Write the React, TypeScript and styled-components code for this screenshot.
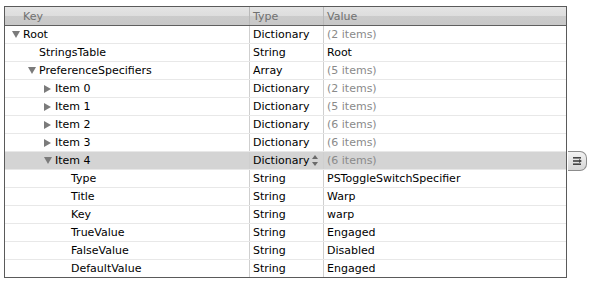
import React from "react";
import styled, { createGlobalStyle } from "styled-components";

const Global = createGlobalStyle`
  html, body { margin: 0; padding: 0; background: #ffffff; }
  body { font-family: "Lucida Grande", "DejaVu Sans", sans-serif; }
`;

const Page = styled.div`
  padding: 6px 0 0 4px;
  width: 590px;
  height: 283px;
  box-sizing: border-box;
`;

const Table = styled.div`
  width: 563px;
  border: 1px solid #5a5a5a;
  box-sizing: border-box;
  font-size: 11px;
  color: #000;
`;

const Row = styled.div<{ $selected?: boolean; $last?: boolean }>`
  position: relative;
  display: grid;
  grid-template-columns: 245px 74px 1fr;
  height: 17px;
  border-bottom: ${(p) => (p.$last ? "none" : "1px solid #e8e8e8")};
  background: ${(p) => (p.$selected ? "#d4d4d4" : "#ffffff")};
`;

const Header = styled.div`
  display: grid;
  grid-template-columns: 245px 74px 1fr;
  height: 18px;
  border-bottom: 1px solid #5f5f5f;
  background: linear-gradient(#e4e4e4 0%, #dddddd 50%, #cbcbcb 50%, #c8c8c8 100%);
  color: #707070;
`;

const HeadCell = styled.div<{ $pad: number; $divider?: boolean }>`
  display: flex;
  align-items: center;
  padding-left: ${(p) => p.$pad}px;
  border-right: ${(p) => (p.$divider ? "1px solid #b9b9b9" : "none")};
  box-sizing: border-box;
`;

const Cell = styled.div<{ $divider?: boolean; $muted?: boolean }>`
  display: flex;
  align-items: center;
  padding-left: 3px;
  box-sizing: border-box;
  border-right: ${(p) => (p.$divider ? "1px solid #cfcfcf" : "none")};
  color: ${(p) => (p.$muted ? "#8a8a8a" : "#000")};
  white-space: nowrap;
  overflow: hidden;
`;

const KeyCell = styled(Cell)<{ $level: number }>`
  padding-left: ${(p) => 7 + p.$level * 16}px;
`;

const Disclosure = styled.span`
  width: 11px;
  flex: none;
  display: flex;
  align-items: center;
`;

const TypeInner = styled.div`
  display: flex;
  align-items: center;
  justify-content: space-between;
  width: 100%;
  padding-right: 5px;
`;

const OptionsButton = styled.div`
  position: absolute;
  right: -21px;
  top: -1px;
  width: 18px;
  height: 18px;
  border: 1px solid #8c8c8c;
  border-left: none;
  border-radius: 0 7px 7px 0;
  background: linear-gradient(#f2f2f2, #d6d6d6);
  display: flex;
  align-items: center;
  justify-content: center;
`;

type Item = {
  key: string;
  level: number;
  type: string;
  value: string;
  muted?: boolean;
  tri?: "open" | "closed";
  selected?: boolean;
};

const rows: Item[] = [
  { key: "Root", level: 0, type: "Dictionary", value: "(2 items)", muted: true, tri: "open" },
  { key: "StringsTable", level: 1, type: "String", value: "Root" },
  { key: "PreferenceSpecifiers", level: 1, type: "Array", value: "(5 items)", muted: true, tri: "open" },
  { key: "Item 0", level: 2, type: "Dictionary", value: "(2 items)", muted: true, tri: "closed" },
  { key: "Item 1", level: 2, type: "Dictionary", value: "(5 items)", muted: true, tri: "closed" },
  { key: "Item 2", level: 2, type: "Dictionary", value: "(6 items)", muted: true, tri: "closed" },
  { key: "Item 3", level: 2, type: "Dictionary", value: "(6 items)", muted: true, tri: "closed" },
  { key: "Item 4", level: 2, type: "Dictionary", value: "(6 items)", muted: true, tri: "open", selected: true },
  { key: "Type", level: 3, type: "String", value: "PSToggleSwitchSpecifier" },
  { key: "Title", level: 3, type: "String", value: "Warp" },
  { key: "Key", level: 3, type: "String", value: "warp" },
  { key: "TrueValue", level: 3, type: "String", value: "Engaged" },
  { key: "FalseValue", level: 3, type: "String", value: "Disabled" },
  { key: "DefaultValue", level: 3, type: "String", value: "Engaged" },
];

const Triangle = ({ open }: { open: boolean }) =>
  open ? (
    <svg width="8" height="7" viewBox="0 0 8 7">
      <polygon points="0,0 8,0 4,7" fill="#7b7b7b" />
    </svg>
  ) : (
    <svg width="7" height="8" viewBox="0 0 7 8">
      <polygon points="0,0 7,4 0,8" fill="#7b7b7b" />
    </svg>
  );

const Stepper = () => (
  <svg width="6" height="11" viewBox="0 0 6 11">
    <polygon points="3,0 6,4 0,4" fill="#6a6a6a" />
    <polygon points="0,7 6,7 3,11" fill="#6a6a6a" />
  </svg>
);

const MenuGlyph = () => (
  <svg width="10" height="8" viewBox="0 0 10 8">
    <rect x="1" y="0" width="8" height="1.6" fill="#444" />
    <rect x="1" y="3.2" width="8" height="1.6" fill="#444" />
    <rect x="1" y="6.4" width="8" height="1.6" fill="#444" />
    <polygon points="7,2 10,4 7,6" fill="#444" />
  </svg>
);

export default function App() {
  return (
    <>
      <Global />
      <Page>
        <Table>
          <Header>
            <HeadCell $pad={18} $divider>Key</HeadCell>
            <HeadCell $pad={3} $divider>Type</HeadCell>
            <HeadCell $pad={3}>Value</HeadCell>
          </Header>
          {rows.map((r, i) => (
            <Row key={i} $selected={r.selected} $last={i === rows.length - 1}>
              <KeyCell $level={r.level} $divider>
                <Disclosure>{r.tri && <Triangle open={r.tri === "open"} />}</Disclosure>
                {r.key}
              </KeyCell>
              <Cell $divider>
                {r.selected ? (
                  <TypeInner>
                    {r.type}
                    <Stepper />
                  </TypeInner>
                ) : (
                  r.type
                )}
              </Cell>
              <Cell $muted={r.muted}>{r.value}</Cell>
              {r.selected && (
                <OptionsButton>
                  <MenuGlyph />
                </OptionsButton>
              )}
            </Row>
          ))}
        </Table>
      </Page>
    </>
  );
}
